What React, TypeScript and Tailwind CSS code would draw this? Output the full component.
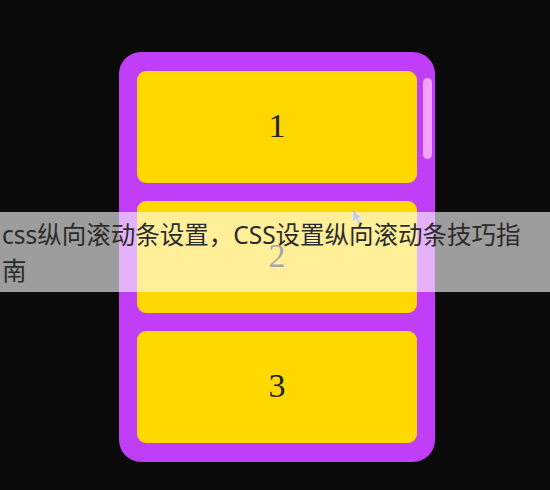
const boxes = [1, 2, 3];

export default function App() {
  return (
    <main className="relative h-[490px] w-full overflow-hidden bg-[#0a0a0a]">
      {/* Scroll box */}
      <div className="flex justify-center pl-1 pt-[52px]">
        <div className="relative h-[410px] w-[316px] overflow-hidden rounded-[22px] bg-[#c03ef8] py-[19px] pl-[18px] pr-[18px]">
          <div className="flex flex-col gap-[18px]">
            {boxes.map((n) => (
              <div
                key={n}
                className="flex h-[112px] shrink-0 items-center justify-center rounded-[9px] bg-[#ffd800] pb-[4px] font-['Liberation_Serif',serif] text-[34px] text-[#222]"
              >
                {n}
              </div>
            ))}
          </div>
          {/* scrollbar thumb */}
          <div className="absolute left-[304px] top-[26px] h-[81px] w-[9px] rounded-full bg-[#f4a2ff]" />
        </div>
      </div>

      {/* Mouse pointer */}
      <svg
        className="absolute left-[352px] top-[209px]"
        width="11"
        height="16"
        viewBox="0 0 11 16"
      >
        <path
          d="M1 1 L1 13 L4 10 L6.5 15 L8.5 14 L6 9 L10 9 Z"
          fill="#6f80a6"
          stroke="#c9d2e6"
          strokeWidth="0.8"
        />
      </svg>

      {/* Title strip */}
      <div className="absolute left-0 right-0 top-[212px] h-[80px] bg-white/60 pl-[2px] pr-[20px] pt-[5px] font-['Noto_Sans','Noto_Sans_CJK_SC',sans-serif] text-[24.5px] leading-[36px] text-[#2b2b2b]">
        css纵向滚动条设置，CSS设置纵向滚动条技巧指南
      </div>
    </main>
  );
}
